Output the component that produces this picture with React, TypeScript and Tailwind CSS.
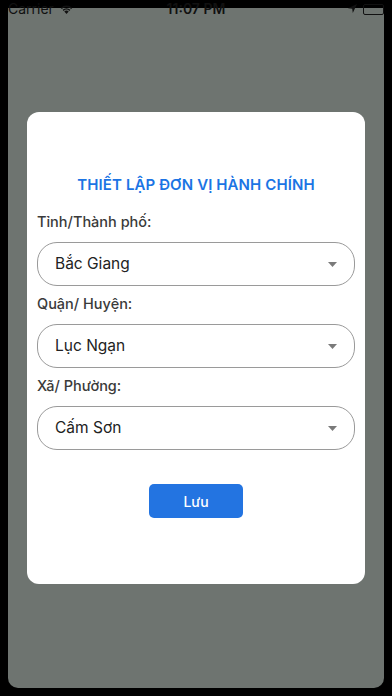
import { useState } from "react";

const fields = [
  { label: "Tỉnh/Thành phố:", value: "Bắc Giang" },
  { label: "Quận/ Huyện:", value: "Lục Ngạn" },
  { label: "Xã/ Phường:", value: "Cấm Sơn" },
];

function Caret() {
  return (
    <svg width="9" height="5" viewBox="0 0 9 5" className="shrink-0">
      <path d="M0 0h9L4.5 5z" fill="#7a7a7a" />
    </svg>
  );
}

export default function App() {
  const [values] = useState(fields);

  return (
    <div className="w-[392px] h-[696px] bg-black relative overflow-hidden font-['Inter',sans-serif]">
      {/* Screen */}
      <div className="absolute left-2 top-2 w-[376px] h-[680px] bg-[#6e7470] rounded-b-[10px]" />

      {/* Status bar (cut off at top) */}
      <div className="absolute left-0 top-0 w-full h-[18px] flex items-center justify-between pl-2 pr-[8px] text-[#111] text-[14px] leading-none">
        <div className="flex items-center gap-[6px]">
          <span>Carrier</span>
          <svg width="13" height="10" viewBox="0 0 13 10">
            <path d="M6.5 10L4.3 7.6a3.2 3.2 0 0 1 4.4 0z" fill="#111" />
            <path d="M2.6 5.8a5.6 5.6 0 0 1 7.8 0l-1 1.1a4.2 4.2 0 0 0-5.8 0z" fill="#111" />
            <path d="M0.8 3.9a8.2 8.2 0 0 1 11.4 0l-1 1.1a6.8 6.8 0 0 0-9.4 0z" fill="#111" />
          </svg>
        </div>
        <span className="absolute left-1/2 -translate-x-1/2 font-semibold">11:07 PM</span>
        <div className="flex items-center gap-[6px]">
          <svg width="9" height="10" viewBox="0 0 9 10">
            <path d="M9 0L0 4.2l4.2.6.6 4.2z" fill="#111" />
          </svg>
          <div className="w-[21px] h-[11px] border border-[#111] rounded-[2px]" />
        </div>
      </div>

      {/* Modal */}
      <div className="absolute left-[27px] top-[112px] w-[338px] h-[472px] bg-white rounded-[12px] px-[10px] pt-[63px]">
        <h2 className="text-center text-[15px] font-semibold text-[#1b74e4] tracking-[0.1px] leading-[20px]">
          THIẾT LẬP ĐƠN VỊ HÀNH CHÍNH
        </h2>
        <div className="mt-[17px] flex flex-col">
          {values.map((f) => (
            <div key={f.label} className="flex flex-col">
              <div className="text-[14.5px] font-medium text-[#3a3a3a] leading-[20px] h-[20px] mb-[10px]">
                {f.label}
              </div>
              <div className="h-[44px] border border-[#9a9a9a] rounded-[20px] flex items-center justify-between pl-[17px] pr-[17px] mb-[8px]">
                <span className="text-[15.5px] text-[#222]">{f.value}</span>
                <Caret />
              </div>
            </div>
          ))}
        </div>
        <div className="flex justify-center mt-[26px]">
          <button className="w-[94px] h-[34px] bg-[#2374e1] rounded-[5px] text-white text-[14px] font-medium">
            Lưu
          </button>
        </div>
      </div>
    </div>
  );
}
